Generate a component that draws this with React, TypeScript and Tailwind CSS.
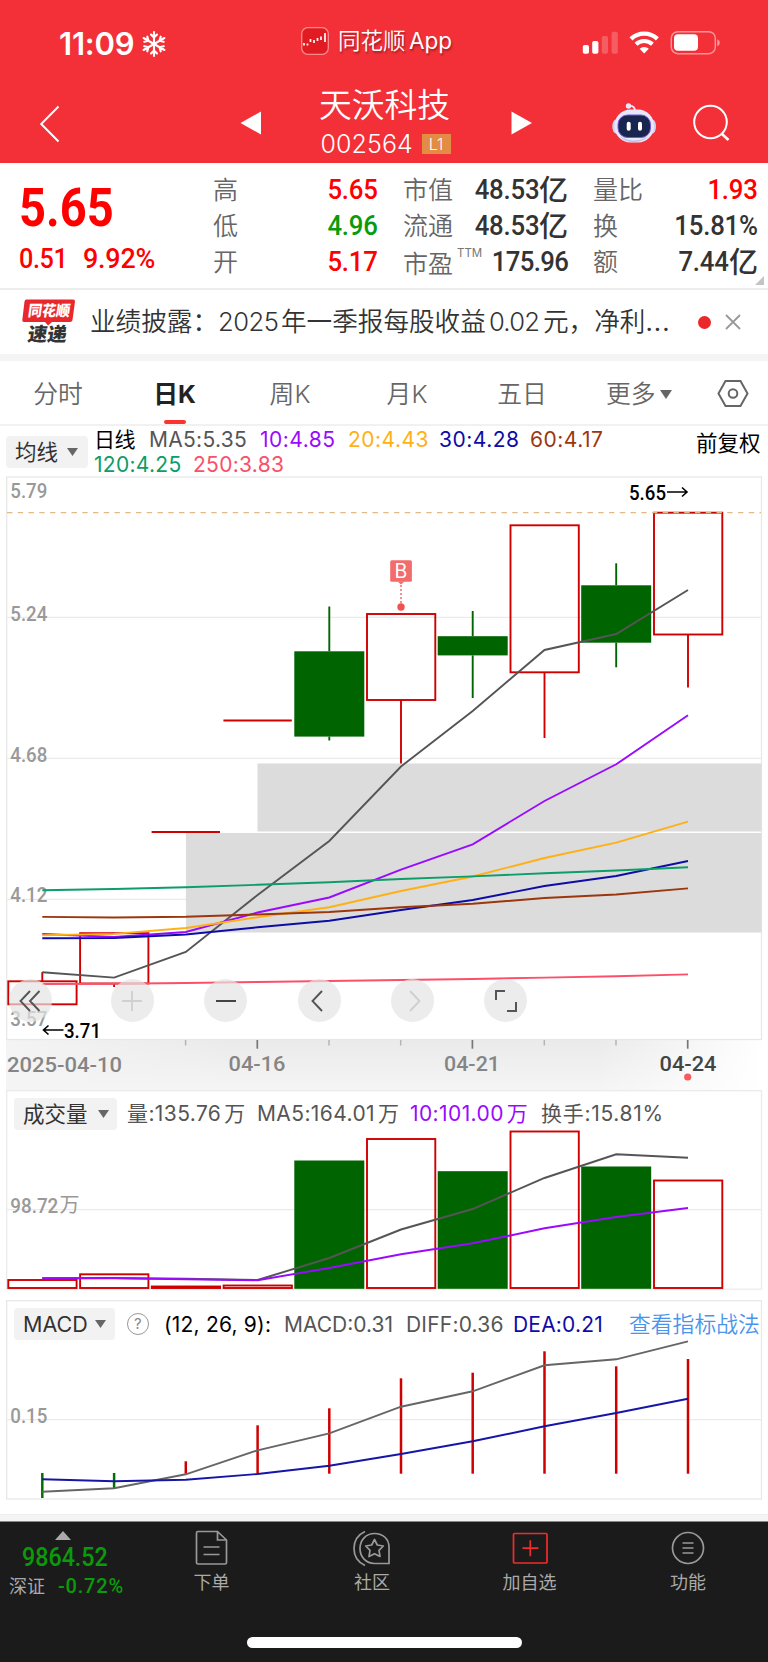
import React from "react";

const RED = "#cf0000";
const GREEN = "#006400";

// x centre of each trading day
const xs = [42.3, 114.1, 185.8, 257.6, 329.3, 401, 472.7, 544.5, 616.2, 688];

const line = (ys: number[]) => ys.map((y, i) => `${xs[i]},${y}`).join(" ");

const candles = [
  { up: true, top: 981.3, bottom: 1004.3, high: 972, low: 1004.3 },
  { up: true, top: 933.2, bottom: 983.5, high: 933.2, low: 987 },
  { up: true, top: 832, bottom: 832, high: 832, low: 832 },
  { up: true, top: 720.4, bottom: 720.4, high: 720.4, low: 720.4 },
  { up: false, top: 651.3, bottom: 736.6, high: 606.5, low: 740.5 },
  { up: true, top: 614, bottom: 700, high: 614, low: 763.5 },
  { up: false, top: 636.2, bottom: 655.4, high: 611, low: 698 },
  { up: true, top: 525.3, bottom: 672.3, high: 525.3, low: 738 },
  { up: false, top: 585.3, bottom: 642.7, high: 563.3, low: 667.3 },
  { up: true, top: 512.7, bottom: 634.5, high: 512.7, low: 687.6 },
];

const averages = [
  { color: "#fa506a", ys: [984, 983.7, 983, 982, 981, 980, 979, 977.6, 976.2, 974.4] },
  { color: "#555555", ys: [972.3, 977.6, 952, 895, 841, 766.5, 711, 650, 634, 590] },
  { color: "#9a0aff", ys: [934, 937, 932, 912.5, 897.5, 869.7, 844.3, 801, 764.3, 715.3] },
  { color: "#ffb015", ys: [935.3, 933.9, 928, 917.3, 907.3, 891, 876.5, 858, 842.7, 821.6] },
  { color: "#0d0da5", ys: [938.3, 938, 934.5, 927.3, 920.7, 910, 900, 886, 876, 861] },
  { color: "#9c370d", ys: [916.9, 917.5, 916.8, 914.5, 912, 907.2, 903.8, 898, 894.5, 888.4] },
  { color: "#0c9d68", ys: [890.3, 889, 887.2, 884.8, 882.3, 879, 876.4, 873.3, 870.5, 867.3] },
];

const volumes = [
  { up: true, top: 1280 },
  { up: true, top: 1274.3 },
  { up: true, top: 1286.5 },
  { up: true, top: 1285.5 },
  { up: false, top: 1160.5 },
  { up: true, top: 1139 },
  { up: false, top: 1171.2 },
  { up: true, top: 1131.5 },
  { up: false, top: 1166.5 },
  { up: true, top: 1180.5 },
];

const macd = [
  [1473, 1498],
  [1473, 1488],
  [1461.3, 1473.7],
  [1425.3, 1473.7],
  [1408.3, 1473.7],
  [1378.3, 1473.7],
  [1372.7, 1473.7],
  [1351.3, 1473.7],
  [1366.3, 1473.7],
  [1359, 1473.7],
];

const axisLabels = [
  { text: "5.79", y: 498 },
  { text: "5.24", y: 620.6 },
  { text: "4.68", y: 761.5 },
  { text: "4.12", y: 902 },
  { text: "3.57", y: 1025.5 },
];

function StatusBar() {
  return (
    <div className="flex h-[82px] items-center pt-[4px] text-white">
      <span className="ml-[59px] w-[82px] pt-[2px] text-[31px] font-semibold tracking-[-0.2px]">11:09</span>
      <svg className="mt-[2px]" width="26" height="28" viewBox="0 0 26 28" fill="none" stroke="#fff" strokeWidth="2.1" strokeLinecap="round">
        {[0, 60, 120, 180, 240, 300].map((a) => (
          <path key={a} transform={`rotate(${a} 13 14)`} d="M13 14V2M10 4.5L13 7.6L16 4.5" />
        ))}
      </svg>
      <svg className="-mt-[5px] ml-[134px]" width="28" height="28" viewBox="0 0 28 28">
        <rect x="0.7" y="0.7" width="26.6" height="26.6" rx="6" fill="#e01c22" stroke="#f88a8e" strokeWidth="1.3" />
        <path d="M3 18.5V16M6.5 18.5V16.5M9.5 15V12M13 16V13M16.5 14V11M20 13V9.5M24 15V6" stroke="#fff" strokeWidth="1.7" />
      </svg>
      <div className="-mt-[4px] ml-[9px] flex w-[243px] items-baseline text-[22.5px] font-[350] [text-shadow:1px_2px_2px_rgba(0,0,0,0.35)]">
        <span className="w-[71px]">同花顺</span>
        <span className="text-[22.5px] font-normal">App</span>
      </div>
      <svg width="140" height="24" viewBox="580 32 140 24">
        <rect x="581.8" y="46" width="6.2" height="8.8" rx="1.8" fill="#fff" />
        <rect x="591.2" y="42" width="6.2" height="12.8" rx="1.8" fill="#fff" />
        <rect x="600.8" y="37" width="6.2" height="17.8" rx="1.8" fill="#fff" opacity="0.22" />
        <rect x="610.6" y="32.8" width="6.2" height="22" rx="1.8" fill="#fff" opacity="0.22" />
        <path d="M630 39.8A19.5 19.5 0 0 1 656.4 39.8" stroke="#fff" strokeWidth="4.4" fill="none" />
        <path d="M635 45.3A12 12 0 0 1 651.4 45.3" stroke="#fff" strokeWidth="4" fill="none" />
        <path d="M638.6 49.8A6.5 6.5 0 0 1 647.8 49.8L643.2 54.6Z" fill="#fff" />
        <rect x="670.3" y="32.7" width="44" height="22" rx="6.5" fill="none" stroke="#fff" strokeWidth="1.4" opacity="0.5" />
        <rect x="673" y="35.3" width="24" height="16.4" rx="4" fill="#fff" />
        <path d="M716.2 40.3Q718.8 41 718.8 43.7Q718.8 46.5 716.2 47.2Z" fill="#fff" opacity="0.5" />
      </svg>
    </div>
  );
}

function NavBar() {
  return (
    <div className="flex h-[81px] items-center text-white">
      <svg className="ml-[38px] mt-[2px]" width="24" height="40" viewBox="0 0 24 40" fill="none" stroke="#fff" strokeWidth="2">
        <path d="M20.5 2.5L3.2 20L20.5 37.5" />
      </svg>
      <svg className="ml-[178px]" width="22" height="24" viewBox="0 0 22 24" fill="#fff">
        <path d="M0.5 12L21 0.5V23.5Z" />
      </svg>
      <div className="flex w-[249px] flex-col items-center">
        <span className="-ml-[4px] -mt-[5px] h-[46px] text-[32.8px] font-[350] leading-[46px]">天沃科技</span>
        <div className="mt-[1px] flex h-[30px] items-center">
          <span className="-ml-[2px] w-[101px] text-[25px] font-[350] leading-[30px] tracking-[0.1px]">002564</span>
          <span className="h-[20px] w-[29px] bg-[#e38c45] text-center text-[16px] font-light leading-[20px]">L1</span>
        </div>
      </div>
      <svg width="22" height="24" viewBox="0 0 22 24" fill="#fff">
        <path d="M21 12L0.5 0.5V23.5Z" />
      </svg>
      <svg className="ml-[78px]" width="46" height="42" viewBox="610 101 46 42">
        <path d="M628 105Q634 104.5 634 110" fill="none" stroke="#e6e8fa" strokeWidth="1.8" />
        <circle cx="627.5" cy="105" r="2.7" fill="#e6e8fa" />
        <ellipse cx="615" cy="125.5" rx="3.7" ry="7" fill="#ccd0f2" />
        <ellipse cx="651.5" cy="125.5" rx="3.5" ry="7" fill="#ccd0f2" />
        <rect x="613.5" y="108.5" width="39.5" height="33" rx="16" fill="#e6e8fa" />
        <path d="M618 135Q633 144 648 135Q641 141 633 141Q624 141 618 135Z" fill="#b9bfea" />
        <rect x="617" y="114" width="32.5" height="22.5" rx="9.5" fill="#18264f" stroke="#7656dc" strokeWidth="1" />
        <rect x="625.7" y="120.7" width="4" height="9" rx="2" fill="#fff" />
        <rect x="637" y="120.7" width="4" height="9" rx="2" fill="#fff" />
      </svg>
      <svg className="ml-[36px] mt-[1px]" width="38" height="38" viewBox="0 0 38 38" fill="none" stroke="#fff" strokeWidth="2">
        <circle cx="17.5" cy="18" r="16.3" />
        <path d="M28.7 29.7L35.5 36" strokeWidth="2.6" />
      </svg>
    </div>
  );
}

const statRows = [
  [
    { label: "高", value: "5.65", cls: "text-[#ff0000]" },
    { label: "市值", value: "48.53", unit: "亿", cls: "text-[#333]" },
    { label: "量比", value: "1.93", cls: "text-[#ff0000]" },
  ],
  [
    { label: "低", value: "4.96", cls: "text-[#0a9b0a]" },
    { label: "流通", value: "48.53", unit: "亿", cls: "text-[#333]" },
    { label: "换", value: "15.81%", cls: "text-[#333]" },
  ],
  [
    { label: "开", value: "5.17", cls: "text-[#ff0000]" },
    { label: "市盈", sup: "TTM", value: "175.96", cls: "text-[#333]" },
    { label: "额", value: "7.44", unit: "亿", cls: "text-[#333]" },
  ],
];

function Quote() {
  return (
    <div className="relative flex h-[127px] border-b-2 border-[#ededed] bg-white">
      <div className="w-[213px] pl-[19px] font-[Roboto] text-[#ff0000]">
        <div className="mt-[15px] h-[60px] origin-left scale-x-[0.88] text-[53.5px] font-bold leading-[60px]">5.65</div>
        <div className="mt-[3px] flex h-[36px] text-[28px] font-medium leading-[36px]">
          <span className="w-[64px] origin-left scale-x-[0.9] tracking-[-0.4px]">0.51</span>
          <span className="origin-left scale-x-[0.96] tracking-[-0.2px]">9.92%</span>
        </div>
      </div>
      <div className="flex flex-1 flex-col pt-[9px]">
        {statRows.map((row, i) => (
          <div key={i} className="grid h-[36px] grid-cols-[190px_190px_165px] items-center">
            {row.map((c: any, j) => (
              <div key={j} className="flex h-[36px] w-[165px] items-center justify-between">
                <span className={c.sup ? "mt-[3px] flex text-[25px] font-[350] leading-[32px] text-[#666]" : "text-[25px] font-[350] leading-[32px] text-[#666]"}>
                  {c.label}
                  {c.sup && <sup className="top-0 ml-[4px] -mt-[1px] text-[11.5px] font-normal leading-[12px] text-[#777]">{c.sup}</sup>}
                </span>
                <span className={`${c.cls} flex items-center font-[Roboto] text-[28px] font-[550] leading-[34px]`}>
                  <span className={c.sup ? "-ml-[10px] origin-right scale-x-[0.92] tracking-[-0.7px]" : "origin-right scale-x-[0.92] tracking-[-0.2px]"}>{c.value}</span>
                  {c.unit && <span className="-mt-[4px] w-[29px] font-['Noto_Sans_CJK_SC'] text-[29px] font-medium leading-[32px]">{c.unit}</span>}
                </span>
              </div>
            ))}
          </div>
        ))}
      </div>
      <svg className="absolute bottom-[3px] right-[4px]" width="9" height="9" viewBox="0 0 9 9" fill="#c4c4c4">
        <path d="M9 0V9H0Z" />
      </svg>
    </div>
  );
}

function News() {
  return (
    <div className="flex h-[64px] items-center bg-white text-[#333]">
      <svg className="ml-[20px]" width="58" height="50" viewBox="20 297 58 50">
        <path d="M26.5 299.5H73Q75.2 299.5 75 301.5L72.5 320Q72.2 322 70 322H52L48 325.5L45 322H24Q22 322 22.3 320L24.5 301.5Q24.7 299.5 26.5 299.5Z" fill="#e9282e" />
        <g transform="skewX(-8)" style={{ transformOrigin: "48px 320px" }} fontFamily="Noto Sans CJK SC, sans-serif" fontWeight="900">
          <text x="27" y="316.5" fontSize="15" textLength="42" lengthAdjust="spacingAndGlyphs" fill="#fff">同花顺</text>
          <text x="30" y="341.5" fontSize="19" textLength="39" lengthAdjust="spacingAndGlyphs" fill="#333">速递</text>
        </g>
      </svg>
      <div className="ml-[12px] flex w-[605px] items-baseline whitespace-nowrap text-[25.6px] font-[350]">
        <span className="w-[128px]">业绩披露：</span>
        <span className="w-[63px] tracking-[-0.5px]">2025</span>
        <span className="w-[208px]">年一季报每股收益</span>
        <span className="w-[54px] tracking-[-0.8px]">0.02</span>
        <span>元，净利</span>
        <span className="font-normal tracking-[1px]">...</span>
      </div>
      <span className="ml-[3px] size-[13px] rounded-full bg-[#e9282e]" />
      <svg className="ml-[14px]" width="16" height="16" viewBox="0 0 16 16" stroke="#999" strokeWidth="1.8">
        <path d="M1 1L15 15M15 1L1 15" />
      </svg>
    </div>
  );
}

const tabs = [
  { label: "分时", cls: "w-[116px]" },
  { label: "日K", cls: "w-[117px]", active: true },
  { label: "周K", cls: "w-[114px]" },
  { label: "月K", cls: "w-[120px]" },
  { label: "五日", cls: "w-[110px]" },
];

function Tabs() {
  return (
    <div className="flex h-[65px] border-b-2 border-[#f1f1f1] bg-white text-[24.8px] font-[350] text-[#666]">
      {tabs.map((t) => (
        <div key={t.label} className={`${t.cls} flex flex-col items-center`}>
          <span className={t.active ? "h-[59px] pt-[2px] font-bold leading-[62px] text-[#222]" : "h-[59px] pt-[2px] leading-[62px]"}>{t.label}</span>
          {t.active && <span className="h-[5px] w-[22px] rounded-[2px] bg-[#fa342f]" />}
        </div>
      ))}
      <div className="flex w-[140px] items-center pl-[29px] pt-[4px]">
        更多
        <svg className="ml-[4px]" width="12" height="9" viewBox="0 0 12 9" fill="#666"><path d="M0 0H12L6 9Z" /></svg>
      </div>
      <svg className="mt-[18px]" width="32" height="29" viewBox="0 0 32 29" fill="none" stroke="#666" strokeWidth="2">
        <path d="M8.5 2H23.5L30.5 14.5L23.5 27H8.5L1.5 14.5Z" />
        <circle cx="16" cy="14.5" r="4.3" />
      </svg>
    </div>
  );
}

function Select({ label, cls }: { label: string; cls: string }) {
  return (
    <div className={`${cls} flex h-[32px] shrink-0 items-center justify-between rounded-[4px] bg-[#f2f2f2] text-[21.5px] tracking-normal text-[#333]`}>
      {label}
      <svg width="11" height="8" viewBox="0 0 11 8" fill="#666"><path d="M0 0H11L5.5 8Z" /></svg>
    </div>
  );
}

function MaLegend() {
  return (
    <div className="flex h-[50px] bg-white">
      <Select label="均线" cls="ml-[6px] mt-[10px] w-[82px] pl-[9px] pr-[10px]" />
      <div className="ml-[6px] w-[599px] pt-[1px] text-[21px] leading-[25px] tracking-[0.5px]">
        <div className="flex h-[25px] whitespace-nowrap">
          <span className="w-[55px] tracking-[-0.5px] text-black">日线</span>
          <span className="w-[111px] tracking-[0.3px] text-[#555]">MA5:5.35</span>
          <span className="w-[88px] text-[#9a0aff]">10:4.85</span>
          <span className="w-[91px] text-[#ffb015]">20:4.43</span>
          <span className="w-[91px] text-[#0d0da5]">30:4.28</span>
          <span className="text-[#9c370d]">60:4.17</span>
        </div>
        <div className="flex h-[25px] whitespace-nowrap">
          <span className="w-[99px] tracking-[0.3px] text-[#0c9d68]">120:4.25</span>
          <span className="tracking-[0.3px] text-[#fa506a]">250:3.83</span>
        </div>
      </div>
      <span className="ml-[3px] mt-[3px] whitespace-nowrap text-[21.5px] leading-[28px] text-black">前复权</span>
    </div>
  );
}

const roundBtn = "flex size-[43px] items-center justify-center rounded-full bg-[#e4e4e4]/70";

function KChart() {
  return (
    <div className="relative h-[614px]">
      <svg className="block" width="768" height="614" viewBox="0 476 768 614" fontFamily="Roboto, sans-serif">
        <defs>
          <linearGradient id="axisY" x1="0" y1="0" x2="0" y2="1">
            <stop offset="0" stopColor="#eaeaea" />
            <stop offset="1" stopColor="#f5f5f5" />
          </linearGradient>
          <linearGradient id="axisX" x1="0" y1="0" x2="1" y2="0">
            <stop offset="0" stopColor="#f4f4f4" />
            <stop offset="0.3" stopColor="#f4f4f4" stopOpacity="0" />
            <stop offset="0.78" stopColor="#fff" stopOpacity="0" />
            <stop offset="1" stopColor="#fff" />
          </linearGradient>
        </defs>
        <rect x="6" y="1040" width="756" height="50" fill="url(#axisY)" />
        <rect x="6" y="1040" width="756" height="50" fill="url(#axisX)" />
        <rect x="6.7" y="477" width="754.8" height="562.5" fill="#fff" stroke="#e8e8e8" strokeWidth="1.3" />
        {[617.3, 758.3, 899.3].map((y) => (
          <path key={y} d={`M7 ${y}H761`} stroke="#ebebeb" strokeWidth="1.3" />
        ))}
        <rect x="257.5" y="763.5" width="504" height="68" fill="#dcdcdc" />
        <rect x="185.9" y="833" width="575.6" height="99.5" fill="#dcdcdc" />
        {axisLabels.map((l) => (
          <text key={l.text} x="10.3" y={l.y} fontSize="20.5" fontWeight="500" fill="#999" textLength="37" lengthAdjust="spacingAndGlyphs">{l.text}</text>
        ))}
        {candles.map((c, i) => {
          const color = c.up ? RED : GREEN;
          return (
            <g key={i} stroke={color} strokeWidth="1.9">
              {c.high < c.top && <path d={`M${xs[i]} ${c.high}V${c.top}`} />}
              {c.low > c.bottom && <path d={`M${xs[i]} ${c.bottom}V${c.low}`} />}
              {c.top === c.bottom ? (
                <path d={`M${xs[i] - 34.2} ${c.top}H${xs[i] + 34.2}`} strokeWidth="2" />
              ) : c.up ? (
                <rect x={xs[i] - 34} y={c.top} width="68.3" height={c.bottom - c.top} fill="none" />
              ) : (
                <rect x={xs[i] - 35} y={c.top} width="70" height={c.bottom - c.top} fill={GREEN} stroke="none" />
              )}
            </g>
          );
        })}
        <path d="M7 512.7H761" stroke="#e3b987" strokeWidth="1.3" strokeDasharray="5.4 5.35" />
        {averages.map((a) => (
          <polyline key={a.color} points={line(a.ys)} fill="none" stroke={a.color} strokeWidth="1.9" />
        ))}
        <text x="629" y="499.7" fontSize="20.5" fontWeight="500" textLength="37" lengthAdjust="spacingAndGlyphs">5.65</text>
        <path d="M667 492H687M682 487.5L687 492L682 496.5" fill="none" stroke="#000" strokeWidth="1.6" />
        <text x="64" y="1037.7" fontSize="20.5" fontWeight="500" textLength="37" lengthAdjust="spacingAndGlyphs">3.71</text>
        <path d="M63.5 1030H43.5M48.5 1025.5L43.5 1030L48.5 1034.5" fill="none" stroke="#000" strokeWidth="1.6" />
        <rect x="390.2" y="560.2" width="21.7" height="21.5" rx="1.5" fill="#f36c6c" />
        <path d="M397.5 581.5H404.5L401 584.5Z" fill="#f36c6c" />
        <text x="401" y="578" fontSize="19.5" textAnchor="middle" fill="#fff" fontFamily="Inter, sans-serif">B</text>
        <path d="M401 585V603" stroke="#f36c6c" strokeWidth="1.5" strokeDasharray="2 2" />
        <circle cx="401" cy="607" r="3.7" fill="#f05252" />
        {[257.3, 472.4, 687.7].map((x) => (
          <path key={x} d={`M${x} 1040V1048.7`} stroke="#777" strokeWidth="1.7" />
        ))}
        {[185.6, 329, 400.7, 544.3, 616].map((x) => (
          <path key={x} d={`M${x} 1040V1045.5`} stroke="#b5b5b5" strokeWidth="1.5" />
        ))}
        <g fontSize="20.5" fontWeight="500" fill="#858585">
          <text x="7" y="1071.7" textLength="115" lengthAdjust="spacingAndGlyphs">2025-04-10</text>
          <text x="228.5" y="1071.3" textLength="57" lengthAdjust="spacingAndGlyphs">04-16</text>
          <text x="444" y="1071.3" textLength="56" lengthAdjust="spacingAndGlyphs">04-21</text>
          <text x="659.5" y="1071.3" textLength="57" lengthAdjust="spacingAndGlyphs" fill="#444">04-24</text>
        </g>
        <circle cx="687.7" cy="1077" r="3.6" fill="#f95a5e" />
      </svg>
      <div className="absolute left-[9px] top-[503px] flex gap-[50.4px]">
        <span className={`${roundBtn} mr-[8.5px]`}>
          <svg className="-ml-[2px]" width="22" height="22" viewBox="0 0 22 22" fill="none" stroke="#555" strokeWidth="1.9"><path d="M11 1L1.5 11L11 21M20.5 1L11 11L20.5 21" /></svg>
        </span>
        <span className={roundBtn}>
          <svg width="20" height="20" viewBox="0 0 20 20" stroke="#d0d0d0" strokeWidth="1.9"><path d="M0 10H20M10 0V20" /></svg>
        </span>
        <span className={roundBtn}>
          <svg width="20" height="20" viewBox="0 0 20 20" stroke="#444" strokeWidth="2"><path d="M0 10H20" /></svg>
        </span>
        <span className={roundBtn}>
          <svg className="-ml-[5px]" width="12" height="22" viewBox="0 0 12 22" fill="none" stroke="#555" strokeWidth="1.9"><path d="M11 1L1.5 11L11 21" /></svg>
        </span>
        <span className={roundBtn}>
          <svg className="ml-[5px]" width="12" height="22" viewBox="0 0 12 22" fill="none" stroke="#cfcfcf" strokeWidth="1.9"><path d="M1 1L10.5 11L1 21" /></svg>
        </span>
        <span className={roundBtn}>
          <svg width="22" height="22" viewBox="0 0 22 22" fill="none" stroke="#555" strokeWidth="2"><path d="M1 10V1H10M21 12V21H12" /></svg>
        </span>
      </div>
    </div>
  );
}

function VolumePanel() {
  return (
    <div className="relative h-[200px]">
      <svg className="block" width="768" height="200" viewBox="0 1090 768 200" fontFamily="Roboto, sans-serif">
        <rect x="6.7" y="1090.7" width="754.8" height="198.5" fill="#fff" stroke="#ebebeb" strokeWidth="1.3" />
        <path d="M7 1209.7H761" stroke="#ebebeb" strokeWidth="1.3" />
        <text x="10.3" y="1212.5" fontSize="20" fontWeight="500" fill="#999" textLength="48" lengthAdjust="spacingAndGlyphs">98.72</text>
        <text x="59.5" y="1212" fontSize="20" fill="#999" fontFamily="Noto Sans CJK SC, sans-serif">万</text>
        {volumes.map((v, i) =>
          v.up ? (
            <rect key={i} x={xs[i] - 34} y={v.top} width="68.3" height={1288 - v.top} fill="none" stroke={RED} strokeWidth="1.9" />
          ) : (
            <rect key={i} x={xs[i] - 35} y={v.top} width="70" height={1288.8 - v.top} fill={GREEN} />
          )
        )}
        <polyline points={line([1278.3, 1278, 1278.7, 1280, 1258, 1229.5, 1209, 1178, 1154.3, 1157.7])} fill="none" stroke="#555" strokeWidth="1.9" />
        <polyline points={line([1278.3, 1278.3, 1279.3, 1280.2, 1268, 1254.3, 1243.3, 1228.3, 1217, 1208])} fill="none" stroke="#9a0aff" strokeWidth="1.9" />
      </svg>
      <div className="absolute left-[14px] top-[8px] flex items-center whitespace-nowrap text-[21px] tracking-[0.4px] text-[#555]">
        <Select label="成交量" cls="w-[103px] pl-[9px] pr-[8px]" />
        <span className="ml-[10px] w-[130px]">量:135.76<span className="ml-[3px]">万</span></span>
        <span className="w-[153px]">MA5:164.01<span className="ml-[3px]">万</span></span>
        <span className="w-[131px] text-[#9a0aff]">10:101.00<span className="ml-[3px]">万</span></span>
        <span className="tracking-[0.7px]">换手:15.81%</span>
      </div>
    </div>
  );
}

function MacdPanel() {
  return (
    <div className="relative mt-[10px] h-[200px]">
      <svg className="block" width="768" height="200" viewBox="0 1300 768 200" fontFamily="Roboto, sans-serif">
        <rect x="6.7" y="1300.7" width="754.8" height="198.3" fill="#fff" stroke="#e8e8e8" strokeWidth="1.3" />
        <path d="M7 1419.7H761" stroke="#ebebeb" strokeWidth="1.3" />
        <text x="10.3" y="1422.5" fontSize="20.5" fontWeight="500" fill="#999" textLength="37" lengthAdjust="spacingAndGlyphs">0.15</text>
        {macd.map(([a, b], i) => (
          <path key={i} d={`M${xs[i]} ${a}V${b}`} stroke={i < 2 ? "#007000" : RED} strokeWidth="2.5" />
        ))}
        <polyline points={line([1491.7, 1488.3, 1474.3, 1450.3, 1433.3, 1406.7, 1391.3, 1365.3, 1359.3, 1341.3])} fill="none" stroke="#666" strokeWidth="1.9" />
        <polyline points={line([1479.3, 1481.3, 1479.7, 1474, 1465.7, 1454, 1441.3, 1426.3, 1413, 1398.7])} fill="none" stroke="#1515a8" strokeWidth="1.9" />
      </svg>
      <div className="absolute left-[14px] top-[8px] flex items-center whitespace-nowrap text-[21px] tracking-[0.2px] text-[#555]">
        <Select label="MACD" cls="w-[101px] pl-[9px] pr-[9px]" />
        <span className="ml-[12px] flex size-[22px] items-center justify-center rounded-full border-[1.5px] border-[#999] text-[15px] text-[#888]">?</span>
        <span className="ml-[15px] w-[120px] pt-[1px] text-black">(12, 26, 9):</span>
        <span className="w-[122px] pt-[1px] tracking-[0px]">MACD:0.31</span>
        <span className="w-[107px] pt-[1px]">DIFF:0.36</span>
        <span className="w-[116px] pt-[1px] text-[#0d0da5]">DEA:0.21</span>
        <span className="text-[21.8px] font-[350] tracking-[0px] text-[#4a94ec]">查看指标战法</span>
      </div>
    </div>
  );
}

function Footer() {
  return (
    <div className="h-[141px] border-t border-[#888] bg-[#1b1b1b] text-[18px] text-[#aaa]">
      <div className="flex h-[84px]">
        <div className="w-[130px]">
          <svg className="ml-[55px] mt-[9px]" width="16" height="9" viewBox="0 0 16 9" fill="#aaa"><path d="M8 0L16 9H0Z" /></svg>
          <div className="ml-[22px] mt-[4px] h-[28px] origin-left scale-x-[0.93] font-[Roboto] text-[25px] font-medium leading-[28px] text-[#0a9b0a]">9864.52</div>
          <div className="ml-[9px] mt-[1px] flex h-[26px] items-center">
            <span className="w-[49px]">深证</span>
            <span className="font-[Roboto] text-[20px] font-medium tracking-[0.8px] text-[#0a9b0a]">-0.72%</span>
          </div>
        </div>
        <div className="flex w-[163px] flex-col items-center pt-[7px]">
          <svg width="36" height="38" viewBox="0 0 36 38" fill="none" stroke="#999" strokeWidth="1.7">
            <path d="M4 2.5H23.5L32.5 11V33.5Q32.5 35 31 35H4Q2.5 35 2.5 33.5V4Q2.5 2.5 4 2.5ZM23.5 2.5V11H32.5M9.5 18H25.5M9.5 25.5H25.5" />
          </svg>
          <span className="mt-[2px]">下单</span>
        </div>
        <div className="flex w-[158px] flex-col items-center pt-[7px]">
          <svg width="40" height="38" viewBox="0 0 40 38" fill="none" stroke="#999" strokeWidth="1.7">
            <path d="M22.5 4.5C31 4.5 37 10 37 18V34.5H22.5C14 34.5 8 28 8 19.5C8 11 14 4.5 22.5 4.5Z" />
            <path d="M13 2.5C5.5 6 2 12 2 19.5C2 27 5.5 33 13 36.5" />
            <path d="M22.5 10.5L25.3 16L31.3 17L27 21.3L28 27.5L22.5 24.7L17 27.5L18 21.3L13.7 17L19.7 16Z" strokeLinejoin="round" />
          </svg>
          <span className="mt-[2px]">社区</span>
        </div>
        <div className="flex w-[157px] flex-col items-center pt-[7px]">
          <svg width="38" height="38" viewBox="0 0 38 38" fill="none" stroke="#f02d2d" strokeWidth="1.7">
            <rect x="2.5" y="4.5" width="33.5" height="29.5" rx="1" />
            <path d="M11.5 19.2H27.5M19.3 11.2V27.2" />
          </svg>
          <span className="mt-[2px]">加自选</span>
        </div>
        <div className="flex w-[160px] flex-col items-center pt-[7px]">
          <svg width="36" height="38" viewBox="0 0 36 38" fill="none" stroke="#999" strokeWidth="1.7">
            <circle cx="18" cy="19" r="15.5" />
            <path d="M12.5 14H23.5M12.5 19H23.5M12.5 24H23.5" />
          </svg>
          <span className="mt-[2px]">功能</span>
        </div>
      </div>
      <div className="ml-[247px] mt-[31px] h-[11px] w-[275px] rounded-full bg-white" />
    </div>
  );
}

export default function App() {
  return (
    <div className="h-[1662px] w-[768px] overflow-hidden bg-white font-['Inter','Noto_Sans_CJK_SC',sans-serif]">
      <div className="h-[163px] bg-[#f33038]">
        <StatusBar />
        <NavBar />
      </div>
      <Quote />
      <News />
      <div className="h-[7px] bg-[#f4f4f4]" />
      <Tabs />
      <MaLegend />
      <KChart />
      <VolumePanel />
      <MacdPanel />
      <div className="mt-[14px] h-[7px] border-t border-[#eee] bg-[#f4f4f4]" />
      <Footer />
    </div>
  );
}
